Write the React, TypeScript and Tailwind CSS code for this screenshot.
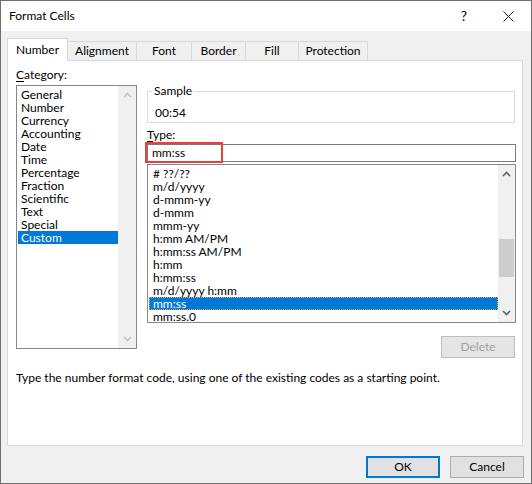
import React from "react";

const categories = [
  "General",
  "Number",
  "Currency",
  "Accounting",
  "Date",
  "Time",
  "Percentage",
  "Fraction",
  "Scientific",
  "Text",
  "Special",
  "Custom",
];

const types = [
  "# ??/??",
  "m/d/yyyy",
  "d-mmm-yy",
  "d-mmm",
  "mmm-yy",
  "h:mm AM/PM",
  "h:mm:ss AM/PM",
  "h:mm",
  "h:mm:ss",
  "m/d/yyyy h:mm",
  "mm:ss",
  "mm:ss.0",
];

function ChevronUp({ color }: { color: string }) {
  return (
    <svg width="9" height="6" viewBox="0 0 9 6">
      <path d="M1 5 L4.5 1.5 L8 5" fill="none" stroke={color} strokeWidth="1.6" />
    </svg>
  );
}

function ChevronDown({ color }: { color: string }) {
  return (
    <svg width="9" height="6" viewBox="0 0 9 6">
      <path d="M1 1 L4.5 4.5 L8 1" fill="none" stroke={color} strokeWidth="1.6" />
    </svg>
  );
}

const tabs = [
  { label: "Number", w: "w-[61px]", active: true },
  { label: "Alignment", w: "w-[70px]", active: false },
  { label: "Font", w: "w-[56px]", active: false },
  { label: "Border", w: "w-[55px]", active: false },
  { label: "Fill", w: "w-[54px]", active: false },
  { label: "Protection", w: "w-[70px]", active: false },
];

export default function App() {
  return (
    <div
      className="w-[532px] h-[484px] border border-[#6f6f6f] flex flex-col bg-[#f0f0f0] text-black text-[12px] overflow-hidden"
      style={{ fontFamily: 'Lato, "Noto Sans", "Liberation Sans", sans-serif' }}
    >
      {/* Title bar */}
      <div className="h-[30px] bg-white flex items-center shrink-0">
        <span className="ml-[8px] text-[12px] leading-[14px]">Format Cells</span>
        <span className="ml-auto mr-[36px] text-[14px] leading-[14px]">?</span>
        <svg className="mr-[17px]" width="11" height="11" viewBox="0 0 11 11">
          <path d="M0.5 0.5 L10.5 10.5 M10.5 0.5 L0.5 10.5" stroke="#222" strokeWidth="1" />
        </svg>
      </div>

      {/* Body */}
      <div className="flex-1 flex flex-col pl-[6px] pt-[7px]">
        {/* Tabs */}
        <div className="flex items-end h-[22px]">
          {tabs.map((t) => (
            <div
              key={t.label}
              className={
                t.active
                  ? `${t.w} h-[23px] -mb-px relative z-10 bg-white border-t border-l border-r border-[#d9d9d9] flex items-center justify-center leading-[14px] pb-[1px]`
                  : `${t.w} h-[19px] -ml-px bg-[#f0f0f0] border-t border-l border-r border-[#d9d9d9] flex items-center justify-center leading-[14px]`
              }
            >
              {t.label}
            </div>
          ))}
        </div>

        {/* Panel */}
        <div className="w-[516px] h-[386px] bg-white border border-[#d9d9d9] pl-[8px] pt-[7px] flex flex-col">
          <div className="flex">
            {/* Left column: Category */}
            <div className="w-[121px] flex flex-col">
              <div className="h-[14px] leading-[14px]">
                <span className="underline underline-offset-2">C</span>ategory:
              </div>
              <div className="mt-[3px] h-[264px] border border-[#828790] flex">
                <div className="flex-1 pt-[2px] pl-[1px]">
                  {categories.map((c) => (
                    <div
                      key={c}
                      className={
                        c === "Custom"
                          ? "h-[13px] leading-[13px] pl-[3px] bg-[#0078d7] text-white"
                          : "h-[13px] leading-[13px] pl-[3px]"
                      }
                    >
                      {c}
                    </div>
                  ))}
                </div>
                <div className="w-[18px] bg-[#f0f0f0] flex flex-col items-center justify-between py-[6px]">
                  <ChevronUp color="#c2c2c2" />
                  <ChevronDown color="#c2c2c2" />
                </div>
              </div>
            </div>

            {/* Right column */}
            <div className="ml-[10px] w-[369px] flex flex-col">
              <fieldset className="mt-[16px] h-[39px] border border-[#dcdcdc] mr-[1px]">
                <legend className="ml-[4px] px-[2px] leading-[14px] h-[14px]">Sample</legend>
                <div className="mt-[8px] pl-[7px] h-[14px] leading-[14px]">00:54</div>
              </fieldset>

              <div className="mt-[5px] h-[14px] leading-[14px]">
                <span className="underline underline-offset-2">T</span>ype:
              </div>
              <div className="relative mt-[2px] h-[18px] border border-[#7a7a7a] flex items-center pl-[4px]">
                <span className="leading-[14px]">mm:ss</span>
                <div className="absolute left-[-3px] top-[-3px] w-[78px] h-[21px] border-2 border-[#e8403f]" />
              </div>

              <div className="mt-[2px] h-[159px] border border-[#828790] flex">
                <div className="flex-1 pt-[2px] pl-[1px]">
                  {types.map((t) => (
                    <div
                      key={t}
                      className={
                        t === "mm:ss"
                          ? "h-[13px] leading-[11px] pl-[3px] bg-[#0078d7] text-white border border-dotted border-[#f5a33c]"
                          : "h-[13px] leading-[13px] pl-[4px]"
                      }
                    >
                      {t}
                    </div>
                  ))}
                </div>
                <div className="w-[17px] bg-[#f0f0f0] flex flex-col items-center py-[6px]">
                  <ChevronUp color="#606060" />
                  <div className="mt-[62px] w-[15px] h-[38px] bg-[#cdcdcd]" />
                  <div className="mt-auto">
                    <ChevronDown color="#606060" />
                  </div>
                </div>
              </div>

              <div className="mt-[13px] flex justify-end">
                <div className="w-[74px] h-[22px] mr-[1px] border border-[#bfbfbf] bg-[#e5e5e5] text-[#a0a0a0] flex items-center justify-center leading-[14px]">
                  Delete
                </div>
              </div>
            </div>
          </div>

          <div className="mt-[13px] h-[14px] leading-[14px]">
            Type the number format code, using one of the existing codes as a starting point.
          </div>
        </div>

        {/* Buttons */}
        <div className="mt-[10px] flex justify-end gap-[10px] mr-[7px]">
          <div className="w-[74px] h-[22px] border-2 border-[#0078d7] bg-[#e1e1e1] flex items-center justify-center leading-[14px]">
            OK
          </div>
          <div className="w-[74px] h-[22px] border border-[#adadad] bg-[#e1e1e1] flex items-center justify-center leading-[14px]">
            Cancel
          </div>
        </div>
      </div>
    </div>
  );
}
